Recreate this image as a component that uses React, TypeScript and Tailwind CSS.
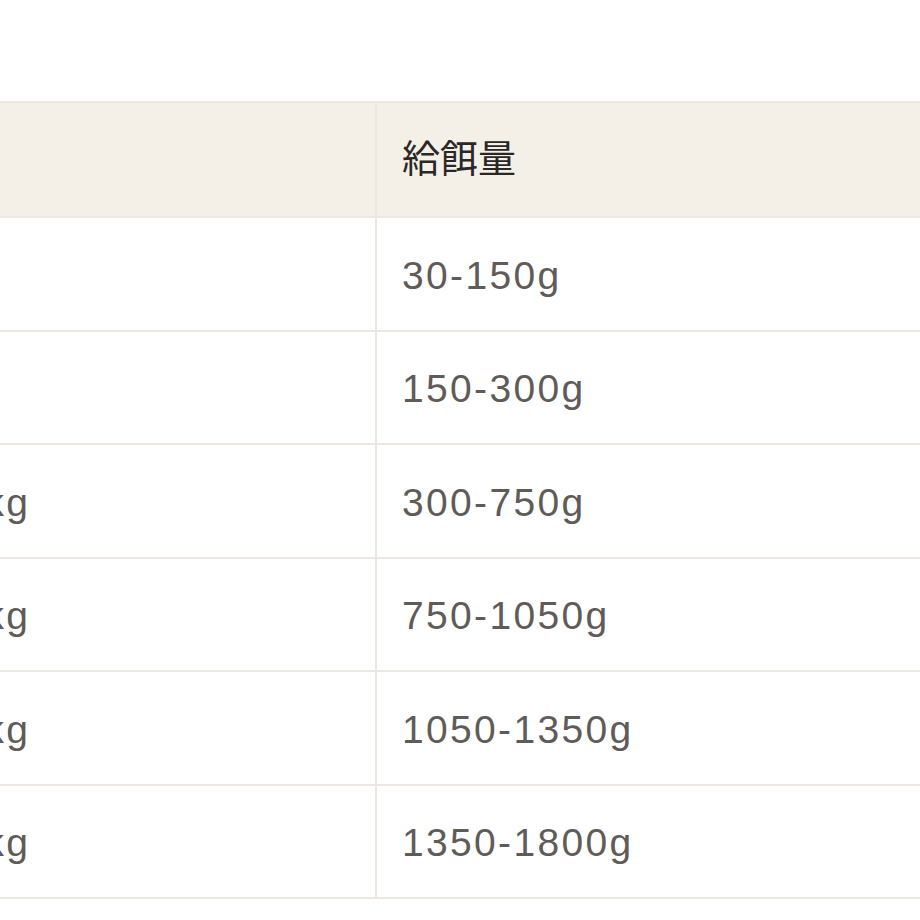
import React from "react";

type Row = {
  weight: string;
  amount: string;
};

const rows: Row[] = [
  { weight: "1-5kg", amount: "30-150g" },
  { weight: "5-8kg", amount: "150-300g" },
  { weight: "10-25kg", amount: "300-750g" },
  { weight: "25-35kg", amount: "750-1050g" },
  { weight: "35-45kg", amount: "1050-1350g" },
  { weight: "45-60kg", amount: "1350-1800g" },
];

const App = () => {
  return (
    <div className="w-[920px] h-[920px] overflow-hidden bg-white pt-[101px] font-['Liberation_Sans','Noto_Sans_CJK_JP',sans-serif]">
      <table className="ml-[-151px] w-[1200px] table-fixed border-collapse text-[39px] tracking-[0.06em]">
        <colgroup>
          <col className="w-[526px]" />
          <col />
        </colgroup>
        <thead>
          <tr className="bg-[#f4f0e7]">
            <th className="h-[115px] border-2 border-[#ece7e0] pl-[22px] text-left text-[38px] font-normal tracking-normal text-[#2a2827]">
              体重
            </th>
            <th className="h-[115px] border-2 border-[#ece7e0] pl-[25px] text-left text-[38px] font-normal tracking-normal text-[#2a2827]">
              給餌量
            </th>
          </tr>
        </thead>
        <tbody>
          {rows.map((row, index) => {
            return (
              <tr key={index}>
                <td className="h-[113.5px] border-2 border-[#ece7e0] pl-[22px] pt-1 text-[#5f5b58]">
                  {row.weight}
                </td>
                <td className="h-[113.5px] border-2 border-[#ece7e0] pl-[25px] pt-1 text-[#5f5b58]">
                  {row.amount}
                </td>
              </tr>
            );
          })}
        </tbody>
      </table>
    </div>
  );
};

export default App;
